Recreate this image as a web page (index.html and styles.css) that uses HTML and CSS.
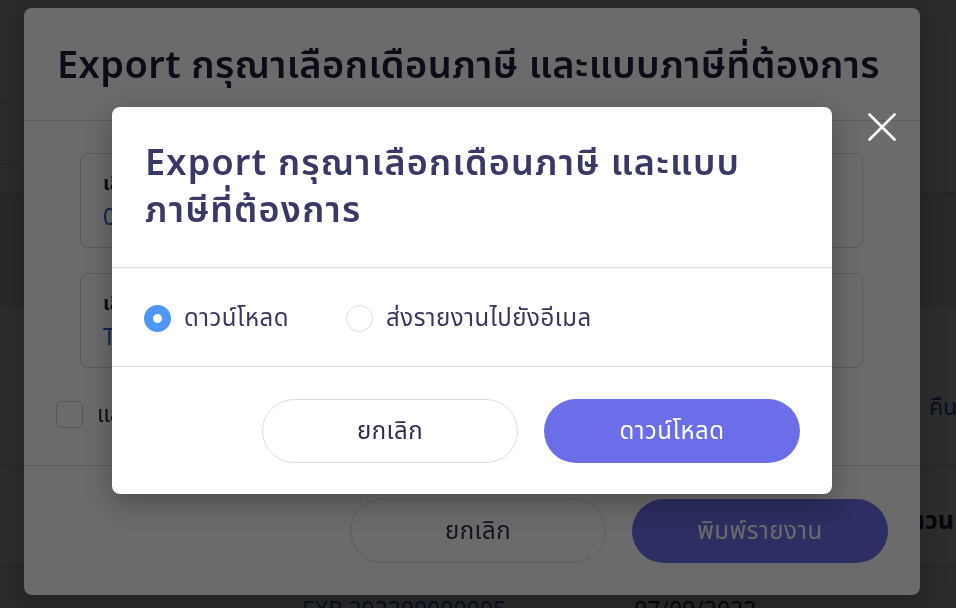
FILE: index.html
```html
<!DOCTYPE html>
<html lang="th">
<head>
<meta charset="utf-8">
<title>Export</title>
<link rel="stylesheet" href="styles.css">
</head>
<body>
<div class="page">
  <div class="page-head">
    <div class="round-btn"><span>c</span></div>
  </div>
  <div class="page-row row-a"></div>
  <div class="page-row row-b"><span class="link">คืนเงิน</span></div>
  <div class="page-row row-c"><span class="th-bold">จำนวน</span></div>
  <div class="page-row row-d"><span class="cell-id">EXP 202200000005</span><span class="cell-date">07/09/2022</span></div>
</div>

<div class="overlay"></div>

<div class="modal modal-main">
  <div class="mm-header">
    <h2 class="mm-title">Export กรุณาเลือกเดือนภาษี และแบบภาษีที่ต้องการ</h2>
  </div>
  <div class="mm-body">
    <div class="field">
      <div class="field-label">เลือกเดือนภาษี</div>
      <div class="field-value">09/2022</div>
    </div>
    <div class="field field-select">
      <div class="field-text">
        <div class="field-label">เลือกแบบภาษี</div>
        <div class="field-value">TAX ทั้งหมด</div>
      </div>
      <svg class="chev" width="16" height="10" viewBox="0 0 16 10"><path d="M2 2 L8 8 L14 2" fill="none" stroke="#1e1e3a" stroke-width="2" stroke-linecap="round" stroke-linejoin="round"/></svg>
    </div>
    <label class="check-row"><span class="checkbox"></span><span class="check-text">และส่งรายงานไปยังอีเมล</span></label>
  </div>
  <div class="mm-footer">
    <button class="btn btn-outline">ยกเลิก</button>
    <button class="btn btn-primary">พิมพ์รายงาน</button>
  </div>
</div>

<div class="overlay overlay-top"></div>

<div class="modal modal-top">
  <div class="mt-header">
    <h2 class="mt-title">Export กรุณาเลือกเดือนภาษี และแบบ<br>ภาษีที่ต้องการ</h2>
  </div>
  <div class="mt-body">
    <label class="radio"><span class="radio-dot checked"></span><span class="radio-text">ดาวน์โหลด</span></label>
    <label class="radio"><span class="radio-dot"></span><span class="radio-text">ส่งรายงานไปยังอีเมล</span></label>
  </div>
  <div class="mt-footer">
    <button class="btn btn-outline">ยกเลิก</button>
    <button class="btn btn-primary">ดาวน์โหลด</button>
  </div>
</div>

<button class="close" aria-label="close">
  <svg width="28" height="28" viewBox="0 0 28 28"><path d="M1.5 1.5 L26.5 26.5 M26.5 1.5 L1.5 26.5" stroke="#ffffff" stroke-width="2.6" stroke-linecap="round"/></svg>
</button>
</body>
</html>
```

FILE: styles.css
```css
* { box-sizing: border-box; }
html, body {
  margin: 0;
  padding: 0;
  width: 956px;
  height: 608px;
  overflow: hidden;
}
body {
  font-family: "Noto Sans", "Noto Sans Thai", "Noto Sans Thai UI", sans-serif;
  background: #f4f4f6;
  color: #1e1e3a;
}

/* background page */
.page {
  width: 956px;
  display: flex;
  flex-direction: column;
}
.page-head {
  height: 193px;
  padding-top: 103px;
  border-bottom: 1px solid #d4d4d8;
}
.round-btn {
  width: 62px;
  height: 62px;
  margin-left: -25px;
  border-radius: 50%;
  border: 1px solid #d4d4d8;
  display: flex;
  align-items: center;
  justify-content: flex-end;
  font-size: 18px;
  font-weight: 700;
}
.round-btn span { margin-right: -12px; }
.page-row {
  border-bottom: 1px solid #d4d4d8;
  display: flex;
  align-items: flex-start;
}
.row-a { height: 114px; background: #e4e4e8; }
.row-b { height: 159px; background: #ffffff; padding-top: 84px; }
.row-c { height: 101px; background: #ffffff; padding-top: 36px; }
.row-d { height: 60px; padding-top: 26px; }
.link {
  margin-left: 929px;
  font-size: 23px;
  line-height: 30px;
  color: #1f57c3;
  white-space: nowrap;
}
.th-bold {
  margin-left: 884px;
  font-size: 25px;
  line-height: 34px;
  font-weight: 700;
  white-space: nowrap;
}
.cell-id {
  margin-left: 302px;
  font-size: 23px;
  color: #1f57c3;
  white-space: nowrap;
}
.cell-date {
  margin-left: 128px;
  font-size: 23px;
  color: #1e1e3a;
  white-space: nowrap;
}

/* overlays */
.overlay {
  position: fixed;
  inset: 0;
  background: rgba(0, 0, 0, 0.58);
}

/* modals */
.modal {
  position: absolute;
  background: #ffffff;
  border-radius: 8px;
  display: flex;
  flex-direction: column;
}
.modal-main {
  left: 24px;
  top: 8px;
  width: 896px;
  height: 587px;
  box-shadow: 0 6px 24px rgba(0, 0, 0, 0.25);
}
.mm-header {
  flex: 0 0 113px;
  padding: 30px 33px 0;
  border-bottom: 1px solid #dcdce4;
}
.mm-title {
  margin: 0;
  font-size: 38px;
  line-height: 50px;
  font-weight: 600;
  letter-spacing: 0.4px;
  color: #1e1e3a;
  white-space: nowrap;
}
.mm-body {
  flex: 0 0 345px;
  padding: 32px 57px 0 32px;
  border-bottom: 1px solid #dcdce4;
  display: flex;
  flex-direction: column;
}
.field {
  margin-left: 24px;
  flex: 0 0 95px;
  border: 1px solid #d6d6dc;
  border-radius: 8px;
  padding: 14px 22px 0;
}
.field + .field { margin-top: 25px; }
.field-select {
  display: flex;
  align-items: center;
  justify-content: space-between;
  padding-top: 0;
}
.field-label {
  font-size: 20px;
  font-weight: 700;
  line-height: 30px;
  color: #1e1e3a;
}
.field-value {
  font-size: 23px;
  line-height: 36px;
  color: #1f57c3;
}
.chev { margin-right: 14px; margin-top: 28px; }
.check-row {
  margin-top: 29px;
  display: flex;
  align-items: center;
  gap: 14px;
}
.checkbox {
  width: 27px;
  height: 27px;
  border: 1px solid #d0d0d6;
  border-radius: 5px;
  background: #ffffff;
}
.check-text {
  font-size: 23px;
  color: #1e1e3a;
}
.mm-footer {
  flex: 1;
  padding: 33px 32px 0;
  display: flex;
  justify-content: flex-end;
  gap: 26px;
}

.btn {
  width: 256px;
  height: 64px;
  border-radius: 32px;
  font-family: inherit;
  font-size: 24px;
  letter-spacing: 0.5px;
  cursor: pointer;
}
.btn-outline {
  background: #ffffff;
  border: 1px solid #dcdce6;
  color: #2e2e52;
}
.btn-primary {
  background: #6b6ee8;
  border: none;
  color: #ffffff;
}

.modal-top {
  left: 112px;
  top: 107px;
  width: 720px;
  height: 387px;
  box-shadow: 0 8px 28px rgba(0, 0, 0, 0.3);
}
.mt-header {
  flex: 0 0 161px;
  padding: 31px 32px 0 33px;
  border-bottom: 1px solid #dcdce6;
}
.mt-title {
  margin: 0;
  font-size: 36px;
  line-height: 47px;
  font-weight: 600;
  letter-spacing: 1.2px;
  color: #3a3965;
  white-space: nowrap;
}
.mt-body {
  flex: 0 0 99px;
  padding: 2px 32px 0;
  border-bottom: 1px solid #dcdce6;
  display: flex;
  align-items: center;
  gap: 57px;
}
.radio {
  display: flex;
  align-items: center;
  gap: 13px;
}
.radio-dot {
  width: 27px;
  height: 27px;
  border-radius: 50%;
  border: 1.5px solid #dcdce6;
  background: #ffffff;
}
.radio-dot.checked {
  border: 9px solid #4f96f6;
  background: #ffffff;
}
.radio-text {
  font-size: 24px;
  letter-spacing: 0.5px;
  color: #38385c;
}
.mt-footer {
  flex: 1;
  padding: 32px;
  display: flex;
  justify-content: flex-end;
  gap: 26px;
}

.close {
  position: absolute;
  left: 867px;
  top: 112px;
  width: 30px;
  height: 30px;
  padding: 1px;
  border: none;
  background: transparent;
  cursor: pointer;
}
```
